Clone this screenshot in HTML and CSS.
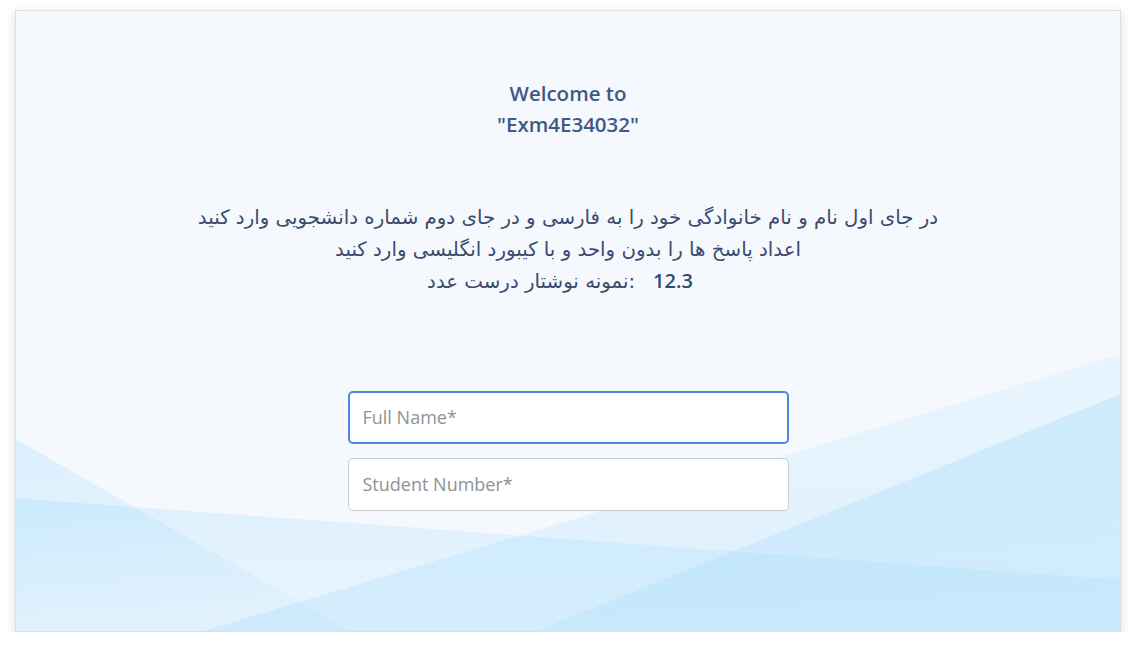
FILE: index.html
```html
<!DOCTYPE html>
<html lang="en">
<head>
<meta charset="utf-8">
<title>Exam</title>
<link rel="stylesheet" href="styles.css">
</head>
<body>
<div class="card">
  <svg class="bg" viewBox="0 0 1105 621" preserveAspectRatio="none" aria-hidden="true">
    <defs>
      <linearGradient id="gA" x1="0" y1="0" x2="0.3" y2="1">
        <stop offset="0" stop-color="#7ccdf8" stop-opacity="0.22"/>
        <stop offset="1" stop-color="#7ccdf8" stop-opacity="0.08"/>
      </linearGradient>
      <linearGradient id="gB" x1="0" y1="0" x2="0" y2="1">
        <stop offset="0" stop-color="#7ccdf8" stop-opacity="0.2"/>
        <stop offset="1" stop-color="#7ccdf8" stop-opacity="0.08"/>
      </linearGradient>
      <linearGradient id="gC" x1="0" y1="0" x2="0" y2="1">
        <stop offset="0" stop-color="#7ccdf8" stop-opacity="0.1"/>
        <stop offset="1" stop-color="#7ccdf8" stop-opacity="0.2"/>
      </linearGradient>
      <linearGradient id="gD" x1="0" y1="0" x2="0.2" y2="1">
        <stop offset="0" stop-color="#7ccdf8" stop-opacity="0.26"/>
        <stop offset="1" stop-color="#7ccdf8" stop-opacity="0.14"/>
      </linearGradient>
    </defs>
    <polygon points="0,429 335,621 0,621" fill="url(#gA)"/>
    <polygon points="0,488 1105,570 1105,621 0,621" fill="url(#gB)"/>
    <polygon points="188,621 1105,344 1105,621" fill="url(#gC)"/>
    <polygon points="521,621 1105,384 1105,621" fill="url(#gD)"/>
  </svg>
  <div class="content">
    <h1 class="title">Welcome to<br>"Exm4E34032"</h1>
    <div class="notes">
      <p class="fa" dir="rtl">در جای اول نام و نام خانوادگی خود را به فارسی و در جای دوم شماره دانشجویی وارد کنید</p>
      <p class="fa" dir="rtl">اعداد پاسخ ها را بدون واحد و با کیبورد انگلیسی وارد کنید</p>
      <p class="sample"><span class="fa" dir="rtl">نمونه نوشتار درست عدد</span><span class="fa colon">:</span><b class="num">12.3</b></p>
    </div>
    <form class="form">
      <input class="field focused" type="text" placeholder="Full Name*" autofocus>
      <input class="field" type="text" placeholder="Student Number*">
    </form>
  </div>
</div>
</body>
</html>
```

FILE: styles.css
```css
html, body {
  margin: 0;
  padding: 0;
  background: #ffffff;
}

body {
  font-family: "Open Sans", "DejaVu Sans", sans-serif;
}

.card {
  position: relative;
  margin: 10px 15px 0 15px;
  height: 622px;
  box-sizing: border-box;
  border: 1px solid #dcdfe3;
  background: #f5f9fe;
  box-shadow: 0 3px 10px rgba(0, 0, 0, 0.15);
  overflow: hidden;
}

.bg {
  position: absolute;
  left: 0;
  top: 0;
  width: 100%;
  height: 100%;
}

.content {
  position: relative;
  display: flex;
  flex-direction: column;
  align-items: center;
  padding-top: 67px;
}

.title {
  margin: 0;
  font-size: 20.5px;
  font-weight: 600;
  line-height: 31px;
  color: #3e5a82;
  text-align: center;
}

.notes {
  margin-top: 62px;
  text-align: center;
  color: #3b4b6c;
}

.notes p {
  margin: 0;
  line-height: 31.5px;
  text-align: center;
}

.fa {
  font-family: "DejaVu Sans", sans-serif;
  font-size: 19.8px;
}

.sample {
  direction: ltr;
  padding-right: 16px;
}

.colon {
  margin-right: 18px;
}

.num {
  font-family: "Open Sans", sans-serif;
  font-size: 20px;
  font-weight: 600;
  color: #2f4b72;
}

.form {
  margin-top: 92px;
  display: flex;
  flex-direction: column;
  gap: 14px;
  width: 441px;
}

.field {
  box-sizing: border-box;
  width: 100%;
  height: 53px;
  margin: 0;
  padding: 0 14px;
  border: 1px solid #c9ccd0;
  border-radius: 5px;
  background: #ffffff;
  font-family: "Open Sans", sans-serif;
  font-size: 18px;
  color: #333;
  outline: none;
}

.field::placeholder {
  color: #8f9296;
}

.field.focused {
  border: 2px solid #4c88e3;
  padding-left: 13px;
}
```
